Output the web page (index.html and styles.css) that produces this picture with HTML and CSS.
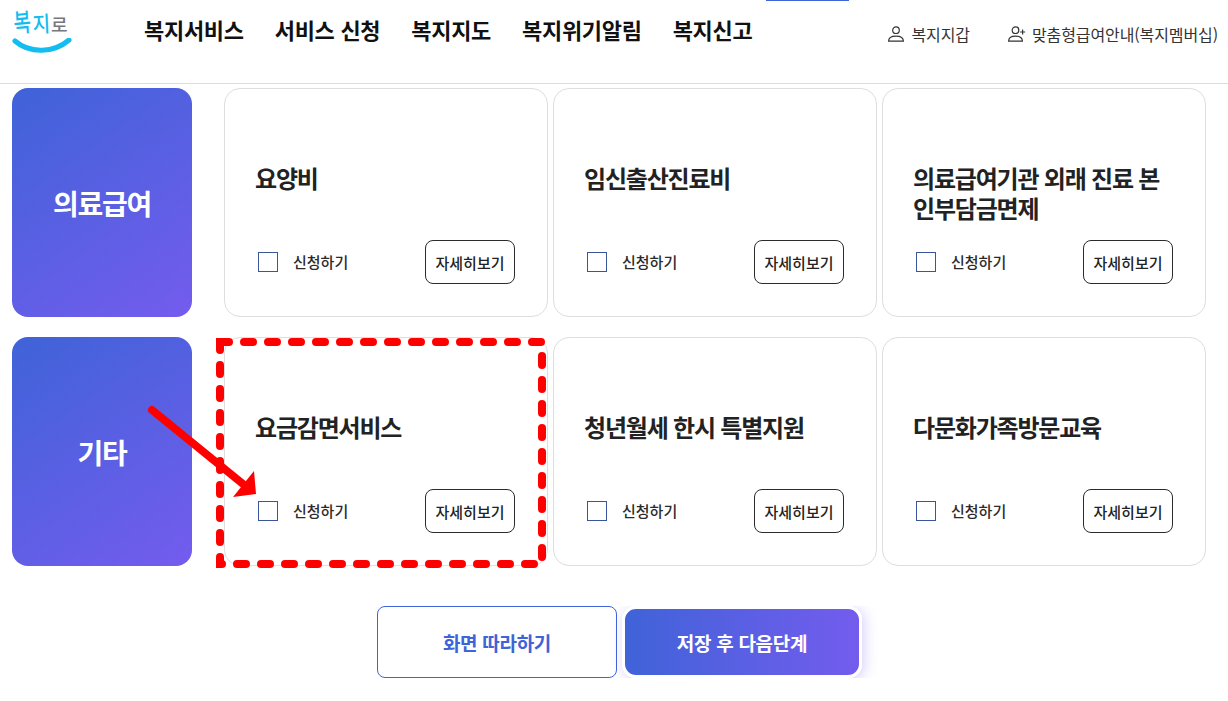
FILE: index.html
```html
<!DOCTYPE html>
<html lang="ko">
<head>
  <meta charset="UTF-8">
  <meta name="viewport" content="width=device-width, initial-scale=1.0">
  <title>복지로</title>
  <link rel="stylesheet" href="styles.css">
</head>
<body>
  <header class="header">
    <a class="logo" href="#">
      <span class="logo-text"><span class="logo-b">복</span><span class="logo-j">지</span><span class="logo-r">로</span></span>
      <svg class="logo-smile" width="60" height="18" viewBox="0 0 60 18"><path d="M3 3 C18 16 42 15 57 2" fill="none" stroke="#14bdf0" stroke-width="5" stroke-linecap="round"/></svg>
    </a>
    <nav class="nav">
      <a href="#">복지서비스</a>
      <a href="#">서비스 신청</a>
      <a href="#">복지지도</a>
      <a href="#">복지위기알림</a>
      <a href="#">복지신고</a>
    </nav>
    <div class="util">
      <a href="#">
        <svg width="18" height="18" viewBox="0 0 18 18" fill="none" stroke="#333" stroke-width="1.2"><circle cx="9" cy="5.2" r="3.3"/><path d="M1.6 16.2 C1.6 12.2 4.8 11.2 9 11.2 C13.2 11.2 16.4 12.2 16.4 16.2 Z"/></svg>
        복지지갑
      </a>
      <a href="#">
        <svg width="18" height="18" viewBox="0 0 18 18" fill="none" stroke="#333" stroke-width="1.2"><circle cx="7.5" cy="5.2" r="3.3"/><path d="M.6 16.2 C.6 12.2 3.4 11.2 7.5 11.2 C10.5 11.2 14.4 12.2 14.4 16.2 Z"/><path d="M14.6 4.5 V9.5 M12.1 7 H17.1"/></svg>
        맞춤형급여안내(복지멤버십)
      </a>
    </div>
  </header>

  <main class="main">
    <section class="group">
      <h2 class="group-name">의료급여</h2>
      <div class="cards">
        <div class="card">
          <h3>요양비</h3>
          <div class="card-foot">
            <label class="check"><span class="box"></span><span class="check-label">신청하기</span></label>
            <button class="more">자세히보기</button>
          </div>
        </div>
        <div class="card">
          <h3>임신출산진료비</h3>
          <div class="card-foot">
            <label class="check"><span class="box"></span><span class="check-label">신청하기</span></label>
            <button class="more">자세히보기</button>
          </div>
        </div>
        <div class="card">
          <h3>의료급여기관 외래 진료 본인부담금면제</h3>
          <div class="card-foot">
            <label class="check"><span class="box"></span><span class="check-label">신청하기</span></label>
            <button class="more">자세히보기</button>
          </div>
        </div>
      </div>
    </section>

    <section class="group">
      <h2 class="group-name">기타</h2>
      <div class="cards">
        <div class="card">
          <h3>요금감면서비스</h3>
          <div class="card-foot">
            <label class="check"><span class="box"></span><span class="check-label">신청하기</span></label>
            <button class="more">자세히보기</button>
          </div>
        </div>
        <div class="card">
          <h3>청년월세 한시 특별지원</h3>
          <div class="card-foot">
            <label class="check"><span class="box"></span><span class="check-label">신청하기</span></label>
            <button class="more">자세히보기</button>
          </div>
        </div>
        <div class="card">
          <h3>다문화가족방문교육</h3>
          <div class="card-foot">
            <label class="check"><span class="box"></span><span class="check-label">신청하기</span></label>
            <button class="more">자세히보기</button>
          </div>
        </div>
      </div>
    </section>

    <div class="actions">
      <button class="btn-outline">화면 따라하기</button>
      <button class="btn-fill">저장 후 다음단계</button>
    </div>
  </main>

  <!-- 캡처 위에 그려진 표시 -->
  <svg class="marks" width="1228" height="701" viewBox="0 0 1228 701" fill="none">
    <path d="M220 342 H542 V564 H220 Z" stroke="#ff0000" stroke-width="8" stroke-linecap="round" stroke-dasharray="9 15"/>
    <path d="M152 410 L243 484" stroke="#ff0000" stroke-width="8" stroke-linecap="round"/>
    <path d="M254 471 L256 494 L233 497 Z" fill="#ff0000"/>
  </svg>
</body>
</html>
```

FILE: styles.css
```css
* {
  margin: 0;
  padding: 0;
  box-sizing: border-box;
}
html, body {
  height: 701px;
  overflow: hidden;
}
body {
  font-family: "Noto Sans CJK KR", "Noto Sans", sans-serif;
  background: #ffffff;
  color: #1d1d1d;
  position: relative;
}
a {
  color: inherit;
  text-decoration: none;
}
button {
  font-family: inherit;
  cursor: pointer;
}
.header {
  position: relative;
  height: 84px;
  border-bottom: 1px solid #dcdcdc;
  display: flex;
  align-items: flex-start;
  padding-left: 12px;
}
.header::before {
  content: "";
  position: absolute;
  top: 0;
  left: 766px;
  width: 83px;
  height: 1px;
  background: #3f63d8;
}
.logo {
  width: 132px;
  flex: none;
  display: block;
}
.logo-text {
  display: flex;
  align-items: flex-end;
  height: 37px;
  padding-left: 2px;
  font-weight: 500;
  line-height: 1;
}
.logo-b {
  color: #14bdf0;
  font-size: 19px;
  transform: scaleY(1.35) rotate(-4deg);
  transform-origin: bottom;
  margin-bottom: 4px;
}
.logo-j {
  color: #14bdf0;
  font-size: 19px;
  transform: scaleY(1.15) rotate(-3deg);
  transform-origin: bottom;
  margin-left: 2px;
  margin-bottom: 4px;
}
.logo-r {
  color: #77787c;
  font-size: 18px;
  margin-left: 0;
  margin-bottom: 4px;
}
.logo-smile {
  display: block;
  margin-top: 1px;
}
.nav {
  display: flex;
  gap: 31px;
  padding-top: 13px;
  font-size: 22px;
  font-weight: 700;
  line-height: 32px;
  color: #111111;
}
.nav a {
  letter-spacing: -0.3px;
  white-space: nowrap;
}
.util {
  margin-left: auto;
  display: flex;
  gap: 38px;
  padding: 23px 10px 0 0;
  font-size: 16px;
  line-height: 22px;
  color: #333333;
}
.util a {
  display: flex;
  align-items: center;
  gap: 6px;
  white-space: nowrap;
  letter-spacing: -0.1px;
}
.main {
  padding: 4px 22px 0 12px;
}
.group {
  display: flex;
  gap: 32px;
  margin-bottom: 20px;
}
.group-name {
  width: 180px;
  height: 229px;
  flex: none;
  border-radius: 16px;
  background: linear-gradient(145deg, #3f63d8 0%, #745cee 100%);
  color: #ffffff;
  font-size: 28px;
  font-weight: 700;
  letter-spacing: -1.3px;
  display: flex;
  align-items: center;
  justify-content: center;
}
.cards {
  display: grid;
  grid-template-columns: repeat(3, 324px);
  gap: 5px;
}
.card {
  height: 229px;
  border: 1px solid #dedede;
  border-radius: 16px;
  background: #ffffff;
  padding: 74px 32px 32px 30px;
  display: flex;
  flex-direction: column;
  justify-content: space-between;
}
.card h3 {
  font-size: 24px;
  font-weight: 700;
  line-height: 30px;
  letter-spacing: -1.2px;
  color: #222222;
}
.card-foot {
  display: flex;
  align-items: center;
  justify-content: space-between;
  padding-left: 3px;
}
.check {
  display: flex;
  align-items: center;
  gap: 15px;
  font-size: 15px;
  font-weight: 500;
  color: #2b2b2b;
}
.check-label {
  margin-bottom: 1px;
}
.box {
  width: 20px;
  height: 20px;
  border: 1px solid #3a5599;
  background: #ffffff;
}
.more {
  width: 90px;
  height: 44px;
  border: 1px solid #2b2b2b;
  border-radius: 8px;
  background: #ffffff;
  font-size: 15px;
  font-weight: 500;
  color: #222222;
}
.actions {
  display: flex;
  align-items: flex-start;
  gap: 5px;
  height: 72px;
  margin: 40px -22px 0 -12px;
  padding-left: 377px;
  overflow: hidden;
}
.btn-outline {
  width: 240px;
  height: 72px;
  border: 1px solid #3f63d8;
  border-radius: 8px;
  background: #ffffff;
  color: #3f63d8;
  font-size: 19px;
  font-weight: 700;
  letter-spacing: -0.3px;
}
.btn-fill {
  width: 240px;
  height: 72px;
  border: 3px solid #ffffff;
  border-radius: 14px;
  background: linear-gradient(90deg, #3f63d8 0%, #745cee 100%) border-box;
  color: #ffffff;
  font-size: 19px;
  font-weight: 700;
  letter-spacing: -0.3px;
  box-shadow: 2px 2px 14px rgba(116, 92, 238, 0.3);
}
.marks {
  position: absolute;
  top: 0;
  left: 0;
  pointer-events: none;
}
```
